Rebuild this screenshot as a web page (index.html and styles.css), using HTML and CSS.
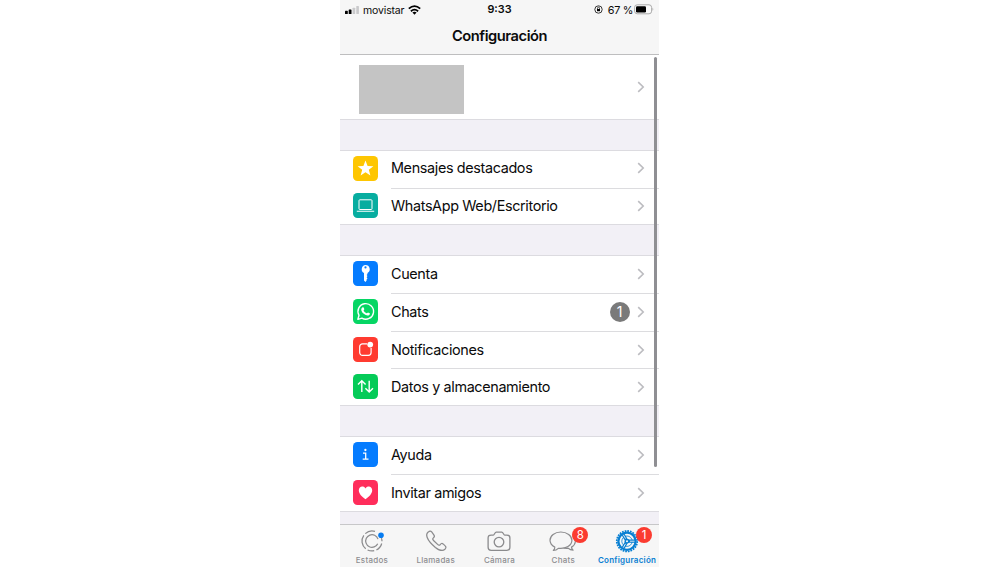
FILE: index.html
```
<!DOCTYPE html>
<html lang="es">
<head>
<meta charset="utf-8">
<title>Configuración</title>
<link rel="stylesheet" href="styles.css">
</head>
<body>
<svg class="defs" width="0" height="0"><symbol id="chevron" viewBox="0 0 8 12"><path d="M1.2 1.2 6.2 6 1.2 10.8" fill="none" stroke="#bcbcc0" stroke-width="1.6"/></symbol></svg>
<main class="phone">
  <header class="header">
    <div class="status">
      <div class="carrier">
        <svg width="15" height="8" viewBox="0 0 15 8"><rect y="4.8" width="2.8" height="3.2" rx=".6"/><rect x="3.7" y="3.4" width="2.8" height="4.6" rx=".6"/><g fill="#c9c9cb"><rect x="7.6" y="1.7" width="2.6" height="6.3" rx=".6"/><rect x="11.3" width="2.6" height="8" rx=".6"/></g></svg>
        <span class="operator">movistar</span>
        <svg width="13" height="10" viewBox="0 0 13 10"><g fill="none" stroke="#000" stroke-width="1.8"><path d="M.8 3.7Q6.5-1.4 12.2 3.7"/><path d="M2.9 6.2Q6.5 3.1 10.1 6.2"/></g><path d="M4.4 7.6Q6.5 6 8.6 7.6L6.5 9.8Z"/></svg>
      </div>
      <div class="time">9:33</div>
      <div class="power">
        <svg width="9" height="9" viewBox="0 0 9 9"><circle cx="4.5" cy="4.5" r="3.7" fill="none" stroke="#222" stroke-width=".9"/><rect x="3" y="4" width="3" height="2.2"/><path d="M3.5 4V3.2a1 1 0 0 1 2 0V4" fill="none" stroke="#111" stroke-width=".7"/></svg>
        <span class="percent">67 %</span>
        <svg width="20" height="11" viewBox="0 0 20 11"><rect x=".6" y=".8" width="17" height="9" rx="2.6" fill="#fafafa" stroke="#aaa" stroke-width="1"/><rect x="2" y="2.2" width="10" height="6.2" rx="1.2"/><path d="M18.5 3.8q1.6 1.5 0 3z" fill="#aaa"/></svg>
      </div>
    </div>
    <h1 class="title">Configuración</h1>
  </header>

  <section class="profile"><div class="redacted"></div><svg class="chevron"><use href="#chevron"/></svg></section>

  <section class="group featured">
    <div class="row"><svg class="icon yellow" viewBox="0 0 25 25"><path d="M12.5 4.5l2.1 5.5 5.8.2-4.6 3.6 1.6 5.6-4.9-3.2-4.9 3.2 1.6-5.6-4.6-3.6 5.8-.2z" fill="#fff"/></svg><div class="cell"><span class="label">Mensajes destacados</span><svg class="chevron"><use href="#chevron"/></svg></div></div>
    <div class="row"><svg class="icon teal" viewBox="0 0 25 25"><g fill="none" stroke="#fff"><rect x="6" y="6.8" width="13" height="9.7" rx=".8" stroke-width="1"/><path d="M3.8 18.3H21.2" stroke-width="1.1"/></g></svg><div class="cell"><span class="label">WhatsApp Web/Escritorio</span><svg class="chevron"><use href="#chevron"/></svg></div></div>
  </section>

  <section class="group account">
    <div class="row"><svg class="icon blue" viewBox="0 0 25 25"><path fill="#fff" fill-rule="evenodd" d="M12.5 4a4.2 4.2 0 0 1 2 7.9v1.2l-.9 1 .9 1-.9 1.1.9 1.1-.9 1.1v1.2l-1.1 1.3-1.5-1.3v-7.7A4.2 4.2 0 0 1 12.5 4zm0 1.3a1.1 1.1 0 1 0 0 2.2 1.1 1.1 0 0 0 0-2.2z"/></svg><div class="cell"><span class="label">Cuenta</span><svg class="chevron"><use href="#chevron"/></svg></div></div>
    <div class="row"><svg class="icon green" viewBox="0 0 25 25"><path d="M4.9 20.3 6 16.3A7.8 7.8 0 1 1 8.9 19.2z" fill="none" stroke="#fff" stroke-width="1.4" stroke-linejoin="round"/><path d="M9.3 8.4c.5-.4 1.1-.3 1.3.1l.7 1.6c.1.5-.7 1.1-.7 1.4.7 1.3 1.7 2.2 3.1 2.8.4 0 .9-1 1.3-.9l1.7.8c.5.3.1 1.3-.4 1.7-1.5 1.2-3.6.4-5.2-.8-1.3-1-2.5-2.4-2.8-3.9-.2-1.1.2-2.2 1-2.8z" fill="#fff"/></svg><div class="cell"><span class="label">Chats</span><span class="count">1</span><svg class="chevron"><use href="#chevron"/></svg></div></div>
    <div class="row"><svg class="icon red" viewBox="0 0 25 25"><path d="M14.1 6.9H9.5a2.8 2.8 0 0 0-2.8 2.8v5.9a2.8 2.8 0 0 0 2.8 2.8h5.8a2.8 2.8 0 0 0 2.8-2.8V11" fill="none" stroke="#fff" stroke-width="1.2"/><circle cx="17.2" cy="7.6" r="2.9" fill="#fff"/></svg><div class="cell"><span class="label">Notificaciones</span><svg class="chevron"><use href="#chevron"/></svg></div></div>
    <div class="row"><svg class="icon emerald" viewBox="0 0 25 25"><path d="M8.8 18V6.8M5 10.6l3.8-3.8 3.8 3.8M16.2 6.8V18M12.4 14.3l3.8 3.8 3.8-3.8" fill="none" stroke="#fff" stroke-width="1.4"/></svg><div class="cell"><span class="label">Datos y almacenamiento</span><svg class="chevron"><use href="#chevron"/></svg></div></div>
  </section>

  <section class="group support">
    <div class="row"><svg class="icon blue" viewBox="0 0 25 25"><circle cx="12.4" cy="8" r="1.15" fill="#fff"/><path d="M10 11.1h2.7v6.1M9.7 17.2h5.8" fill="none" stroke="#fff" stroke-width="1.3"/></svg><div class="cell"><span class="label">Ayuda</span><svg class="chevron"><use href="#chevron"/></svg></div></div>
    <div class="row"><svg class="icon pink" viewBox="0 0 25 25"><path d="M12.5 19.3C9 16.9 5.8 13.8 5.8 10.3c0-4.2 4.9-5 6.7-1.8 1.8-3.2 6.7-2.4 6.7 1.8 0 3.5-3.2 6.6-6.7 9z" fill="#fff"/></svg><div class="cell"><span class="label">Invitar amigos</span><svg class="chevron"><use href="#chevron"/></svg></div></div>
  </section>

  <nav class="tabs">
    <div class="tab"><svg class="tab-icon" viewBox="0 0 30 26"><g fill="none" stroke="#8b8b8d" stroke-width="1.25"><circle cx="15" cy="13" r="6.3" stroke-dasharray="34 5.58" transform="rotate(25 15 13)"/><path d="M18 3.4A10 10 0 0 0 8.3 5.6M6.8 7.3A10 10 0 0 0 8.7 20.8M10.6 22A10 10 0 0 0 17.2 22.7M19.4 22A10 10 0 0 0 24.7 15.5M25 13.2a10 10 0 0 0-.6-3.1"/></g><circle cx="24" cy="7.2" r="2.8" fill="#087cf0"/></svg><span class="tab-label">Estados</span></div>
    <div class="tab"><svg class="tab-icon" viewBox="0 0 30 26"><path d="M7.2 4.1C8.6 2.8 9.8 2.8 10.7 3.8L13 7.1C13.8 8.3 13.3 9.2 12.3 9.9 11.2 10.8 11.8 11.7 12.8 12.8L16.6 16.4C17.7 17.4 18.5 17.5 19.2 16.6 20.1 15.3 21.1 15.2 22.1 15.9L24.2 17.9C25.4 18.9 25 20.1 23.9 21.3 21.8 23.4 18.4 22.5 14.4 19.4 10.6 16.3 7.4 12.7 6.2 9.5 5.2 7 5.6 5.4 7.2 4.1Z" fill="none" stroke="#8b8b8d" stroke-width="1.25"/></svg><span class="tab-label">Llamadas</span></div>
    <div class="tab"><svg class="tab-icon" viewBox="0 0 30 26"><g fill="none" stroke="#8b8b8d" stroke-width="1.3"><path d="M7.1 7.1h2.2c1.2 0 1.4-2.9 3-2.9h5.4c1.6 0 1.8 2.9 3 2.9h2.2c2 0 3 1 3 2.8v9.4c0 2-1 3-3 3H7.1c-2 0-3-1-3-3V9.9c0-1.8 1-2.8 3-2.8z"/><circle cx="15" cy="14.1" r="4.8"/></g></svg><span class="tab-label">Cámara</span></div>
    <div class="tab"><svg class="tab-icon" viewBox="0 0 30 26"><g fill="none" stroke="#8b8b8d" stroke-width="1.2" stroke-linejoin="round"><path d="M12.8 4C6.7 4 2 7.7 2 12.3c0 3 1.9 5.3 4.8 6.8.1 1.4-.5 2.4-1.5 3.3 2.1-.1 3.9-1 5-2.1 7.7 1 13.6-2.9 13.6-8C23.9 7.7 19 4 12.8 4z"/><path d="M24.7 8c4 3.1 3.5 8.7-1.2 11.1.1 1.3.6 2.2 1.6 3.1-2.3 0-3.8-.8-5-2-1.6.3-3.1.2-4.5-.2"/></g></svg><span class="badge">8</span><span class="tab-label">Chats</span></div>
    <div class="tab active"><svg class="tab-icon" viewBox="0 0 30 26"><g fill="none" stroke="#087fd2"><circle cx="15" cy="13.2" r="10.2" stroke-width="1.8" stroke-dasharray="1.7 .97"/><circle cx="15" cy="13.2" r="8.6" stroke-width="2.2"/><path d="M15 13.2h8M15 13.2l-4 6.9M15 13.2l-4-6.9" stroke-width="3.2"/><circle cx="15" cy="13.2" r="5.2" stroke-width=".8"/></g><circle cx="15" cy="13.2" r="2.4" fill="#087fd2"/><circle cx="15" cy="13.2" r="1" fill="#f6f6f6"/><path d="M18 13.2h4.5M13.5 15.8l-2.2 3.8M13.5 10.6l-2.2-3.8" stroke="#f6f6f6" stroke-width=".9"/></svg><span class="badge">1</span><span class="tab-label">Configuración</span></div>
  </nav>
  <div class="scrollbar"></div>
</main>
</body>
</html>
```
FILE: styles.css
```
* { box-sizing: border-box; }
body { margin: 0; background: #fff; font-family: Inter, "Liberation Sans", sans-serif; color: #0b0b0b; }
svg { display: block; flex: none; }
.defs { position: absolute; }
.phone { position: relative; display: flex; flex-direction: column; width: 319px; height: 567px; margin-left: 340px; background: #f2f0f6; overflow: hidden; }
.header { height: 55px; flex: none; background: #f6f6f6; border-bottom: 1px solid #bebebf; }
.status { display: grid; grid-template-columns: 1fr auto 1fr; align-items: center; height: 18px; padding: 0 5px; font-size: 10.5px; line-height: 18px; }
.carrier, .power { display: flex; align-items: center; }
.operator { margin: 1px 4px 0 3px; font-size: 10.5px; line-height: 17px; letter-spacing: -.15px; }
.time { padding-top: 1px; font-weight: 600; font-size: 10.8px; }
.power { justify-content: flex-end; }
.percent { margin: 1px 1px 0 5px; font-size: 10.8px; line-height: 17px; letter-spacing: -.3px; }
.title { margin: 8px 0 0; font-size: 14.7px; line-height: 20px; font-weight: 600; text-align: center; letter-spacing: -.45px; }
.profile { display: flex; align-items: center; justify-content: space-between; height: 65px; flex: none; padding: 0 14.5px 0 19px; background: #fff; border-bottom: 1px solid #dcdbe0; }
.redacted { width: 105px; height: 49px; margin-top: 4px; background: #c4c4c4; }
.chevron { width: 8px; height: 12px; }
.group { display: flex; flex-direction: column; flex: none; margin-top: 30px; background: #fff; border-top: 1px solid #dcdbe0; border-bottom: 1px solid #dcdbe0; }
.featured { height: 75px; }
.account { height: 151px; }
.support { height: 76px; }
.row { display: flex; align-items: center; flex: 1; padding-left: 13.4px; }
.icon { width: 25px; height: 25px; margin: 0 12.6px 2px 0; border-radius: 4.5px; }
.cell { display: flex; align-items: center; flex: 1; height: 100%; padding: 0 14.5px 2px 0; }
.row + .row .icon { margin-bottom: 0; }
.row + .row .cell { padding-bottom: 0; border-top: 1px solid #dcdcdf; }
.label { flex: 1; font-size: 14.4px; line-height: 20px; letter-spacing: -.36px; }
.yellow { background: #fec601; }
.teal { background: #07ada0; }
.blue { background: #057cff; }
.green { background: #06d664; }
.red { background: #ff3b30; }
.emerald { background: #05cb58; }
.pink { background: #ff2d5b; }
.count { width: 20px; height: 20px; margin-right: 7px; border-radius: 50%; background: #7a7a7a; color: #fff; font-size: 14px; line-height: 20px; text-align: center; }
.tabs { display: grid; grid-template-columns: repeat(5, 1fr); height: 43px; margin-top: auto; flex: none; background: #f6f6f6; border-top: 1px solid #c7c7c9; }
.tab { position: relative; display: flex; flex-direction: column; align-items: center; padding-top: 3px; color: #8d8d90; }
.tab-icon { width: 30px; height: 26px; }
.tab-label { margin-top: 1px; font-size: 8px; line-height: 11px; font-weight: 500; letter-spacing: .25px; }
.active { color: #087fd2; }
.active .tab-label { font-weight: 600; }
.badge { position: absolute; left: 41px; top: 2px; width: 16px; height: 16px; border-radius: 50%; background: #fb3b30; color: #fff; font-size: 11.5px; line-height: 16px; text-align: center; }
.scrollbar { position: absolute; left: 314px; top: 57px; width: 2.5px; height: 410px; border-radius: 2px; background: #8f8f93; }
```
